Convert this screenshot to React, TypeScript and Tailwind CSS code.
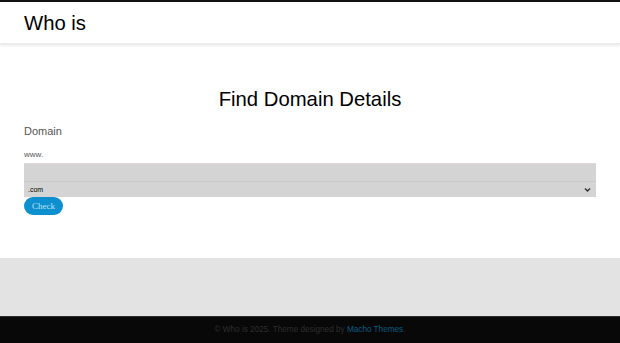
import React from "react";

export default function App() {
  return (
    <div className="w-[620px] h-[343px] flex flex-col bg-white overflow-hidden" style={{ fontFamily: '"Liberation Sans", Arial, sans-serif' }}>
      <div className="h-[2px] bg-[#111]" />
      <header className="h-[42px] flex items-center pl-6 bg-white shadow-[0_2px_2px_rgba(0,0,0,0.08)] border-b border-[#ececec] relative z-10">
        <h1 className="text-[20.3px] leading-none text-black pt-[2px]">Who is</h1>
      </header>
      <main className="flex-1 flex flex-col px-6 pt-[44px]">
        <h2 className="text-[20.3px] leading-[23px] text-black text-center">Find Domain Details</h2>
        <div className="text-[11px] leading-[14px] text-[#555] mt-[13px]">Domain</div>
        <div className="text-[8px] leading-[10px] text-[#555] mt-[12px]">www.</div>
        <div className="mt-[3px] h-[18px] bg-[#d4d4d4] border-t border-[#e0d8d8]" />
        <div className="h-[16px] bg-[#d4d4d4] border-t border-[#c9c9c9] flex items-center justify-between pl-[4px] pr-[5px]">
          <span className="text-[7px] text-black leading-none">.com</span>
          <svg width="7" height="6" viewBox="0 0 7 6"><path d="M1 1.5 L3.5 4 L6 1.5" stroke="#333" strokeWidth="1.5" fill="none" /></svg>
        </div>
        <div className="flex">
          <button className="w-[39px] h-[18px] rounded-full bg-[#0e8fd0] text-[#bfe3f5] text-[9px] leading-none" style={{ fontFamily: '"Liberation Serif", serif' }}>Check</button>
        </div>
      </main>
      <div className="h-[58px] bg-[#e3e3e3]" />
      <footer className="h-[27px] bg-[#080808] border-t border-[#2e2e2e] flex items-center justify-center">
        <span className="text-[8.2px] text-[#2e2e2e]">© Who is 2025. Theme designed by <span className="text-[#0a5b82]">Macho Themes</span>.</span>
      </footer>
    </div>
  );
}
